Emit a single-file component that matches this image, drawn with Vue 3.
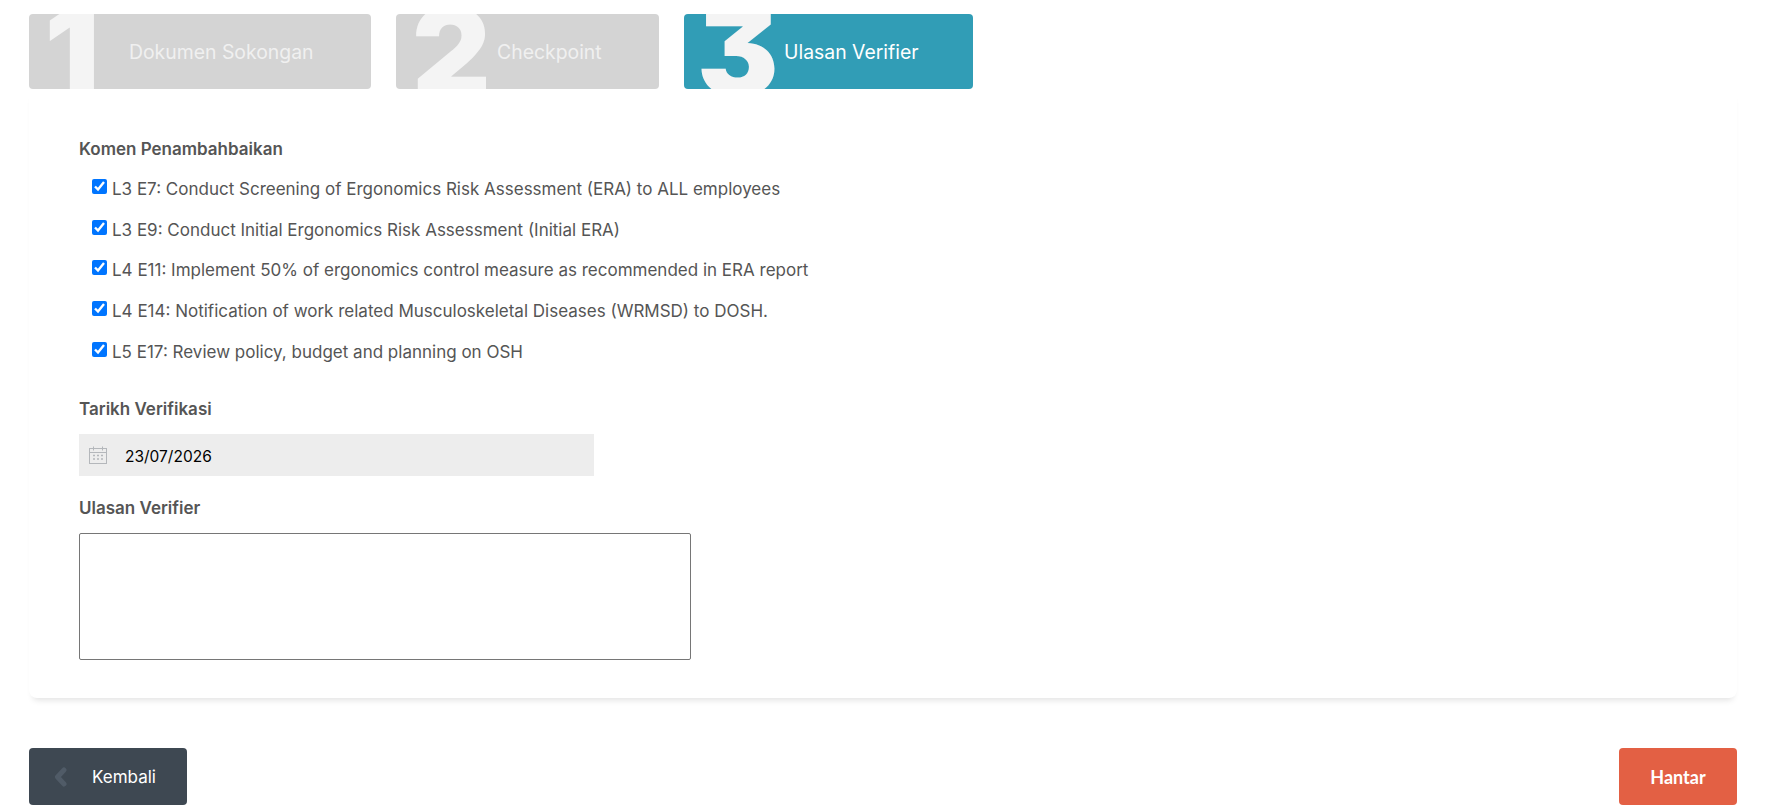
<script setup>
const steps = [
  { n: '1', label: 'Dokumen Sokongan', cls: 's1' },
  { n: '2', label: 'Checkpoint', cls: 's2' },
  { n: '3', label: 'Ulasan Verifier', cls: 's3 active' }
]
const items = [
  'L3 E7: Conduct Screening of Ergonomics Risk Assessment (ERA) to ALL employees',
  'L3 E9: Conduct Initial Ergonomics Risk Assessment (Initial ERA)',
  'L4 E11: Implement 50% of ergonomics control measure as recommended in ERA report',
  'L4 E14: Notification of work related Musculoskeletal Diseases (WRMSD) to DOSH.',
  'L5 E17: Review policy, budget and planning on OSH'
]
</script>

<template>
  <div class="page">
    <div class="steps">
      <div v-for="s in steps" :key="s.n" class="step" :class="s.cls">
        <span class="digit">{{ s.n }}</span>
        <span class="step-label">{{ s.label }}</span>
      </div>
    </div>

    <div class="card">
      <h4 class="title first">Komen Penambahbaikan</h4>
      <label v-for="it in items" :key="it" class="check">
        <input type="checkbox" checked />
        <span>{{ it }}</span>
      </label>

      <h4 class="title date-title">Tarikh Verifikasi</h4>
      <div class="date">
        <svg class="cal" width="18" height="18" viewBox="0 0 18 18" fill="none" stroke="#b4b7bb" stroke-width="1">
          <rect x="0.5" y="2.5" width="17" height="15" />
          <path d="M0.5 6.5H17.5M4.5 0.5V4.5M13.5 0.5V4.5" />
          <path d="M4 9.5h2M8 9.5h2M12 9.5h2M4 13h2M8 13h2M12 13h2" stroke-width="1.6" />
        </svg>
        <span class="date-value">23/07/2026</span>
      </div>

      <h4 class="title ulasan-title">Ulasan Verifier</h4>
      <textarea class="area"></textarea>
    </div>

    <div class="actions">
      <button class="btn back">
        <svg class="chev" width="13" height="20" viewBox="0 0 13 20" fill="none" stroke="#505b67" stroke-width="5" stroke-linecap="round" stroke-linejoin="round">
          <path d="M10 3L3.5 10L10 17" />
        </svg>
        <span>Kembali</span>
      </button>
      <button class="btn send">Hantar</button>
    </div>
  </div>
</template>

<style>
html, body { margin: 0; background: #fff; }
</style>

<style scoped>
.page {
  width: 1708px;
  margin-left: 29px;
  padding-top: 14px;
  font-family: Inter, Roboto, sans-serif;
  color: #555;
}
.steps { display: flex; gap: 25px; }
.step {
  height: 75px;
  background: #d4d4d4;
  border-radius: 4px;
  overflow: hidden;
  display: flex;
  align-items: center;
  color: #f0f0f0;
}
.step.active { background: #319db6; color: #fff; }
.s1 { width: 342px; }
.s2 { width: 263px; }
.s3 { width: 289px; }
.digit {
  font-family: Inter, sans-serif;
  font-weight: 900;
  font-size: 122px;
  line-height: 75px;
  color: #f4f4f4;
  flex: none;
  text-align: center;
  font-feature-settings: "cv09" 1;
}
.s1 .digit { width: 58px; margin-left: 14px; margin-right: 28px; }
.s2 .digit { width: 78px; margin-left: 16px; margin-right: 7px; }
.s3 .digit { width: 80px; margin-left: 13px; margin-right: 7px; }
.step-label { font-size: 19.4px; }

.card {
  height: 609px;
  box-sizing: border-box;
  padding: 1px 0 0 50px;
  border-radius: 8px;
  background: #fff;
  box-shadow: 0 6px 6px -4px rgba(0, 0, 0, 0.12);
}
.title { margin: 0; font-size: 17px; font-weight: 600; line-height: 24px; color: #555; }
.first { margin-top: 47px; margin-bottom: 7px; }
.check {
  display: flex;
  align-items: flex-start;
  height: 40.7px;
  padding-left: 13px;
  font-size: 17px;
  line-height: 24px;
  padding-top: 9px;
  box-sizing: border-box;
}
.check input { width: 15px; height: 15px; margin: 2px 5px 0 0; accent-color: #0075ff; flex: none; }
.date-title { margin-top: 26px; }
.date {
  margin-top: 13px;
  width: 515px;
  height: 42px;
  background: #ededed;
  display: flex;
  align-items: center;
  gap: 18px;
  padding-left: 10px;
  box-sizing: border-box;
  font-size: 15.5px;
  color: #000;
}
.date-value { margin-top: 3px; }
.ulasan-title { margin-top: 20px; }
.area {
  display: block;
  margin-top: 13px;
  width: 612px;
  height: 127px;
  box-sizing: border-box;
  border: 1px solid #767676;
  border-radius: 2px;
  background: #fff;
  resize: none;
}
.actions { display: flex; justify-content: space-between; margin-top: 50px; }
.btn {
  height: 57px;
  border: 0;
  border-radius: 4px;
  color: #fff;
  display: flex;
  align-items: center;
  padding: 0;
}
.back {
  width: 158px;
  background: #3e4852;
  font-family: Inter, sans-serif;
  font-size: 17px;
  padding-left: 25px;
  gap: 25px;
}
.send {
  width: 118px;
  background: #e36044;
  justify-content: center;
  font-family: Lato, sans-serif;
  font-weight: 700;
  font-size: 18px;
}
</style>
